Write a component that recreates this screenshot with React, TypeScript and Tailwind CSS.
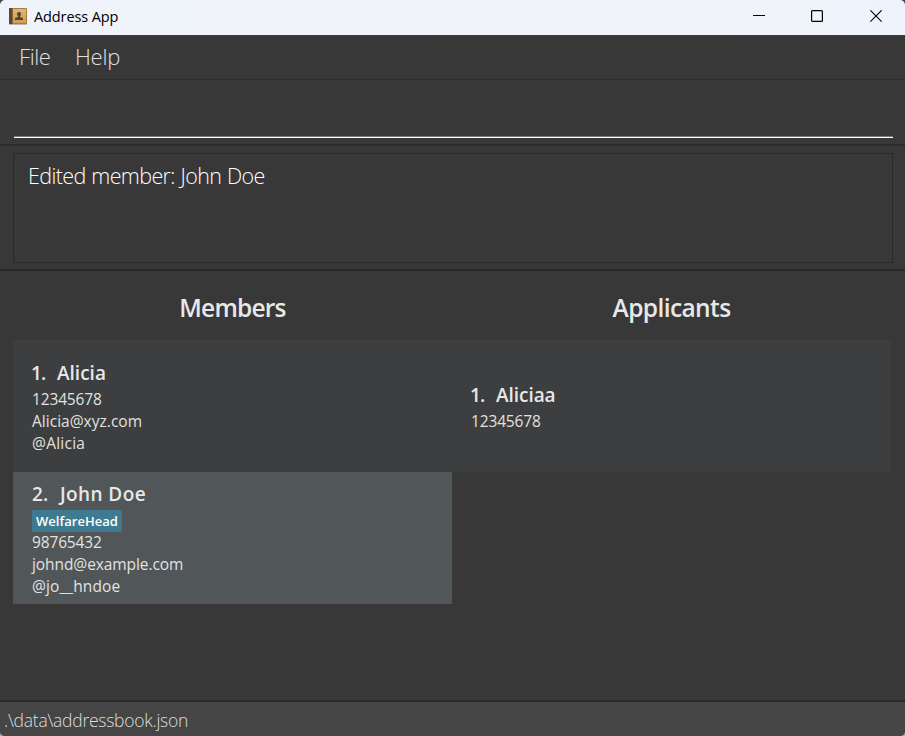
import React from "react";

type Line = { text: string; tracking: string };

type Person = {
  index: number;
  indexClass: string;
  name: string;
  nameClass: string;
  tag?: string;
  lines: Line[];
};

const members: Person[] = [
  {
    index: 1,
    indexClass: "w-[26px] -ml-px tracking-[-0.8px]",
    name: "Alicia",
    nameClass: "tracking-[0px]",
    lines: [
      { text: "12345678", tracking: "tracking-[-0.15px]" },
      { text: "Alicia@xyz.com", tracking: "tracking-[0.02px]" },
      { text: "@Alicia", tracking: "tracking-[0.25px]" },
    ],
  },
  {
    index: 2,
    indexClass: "w-[28px] tracking-[0px]",
    name: "John Doe",
    nameClass: "tracking-[0.4px]",
    tag: "WelfareHead",
    lines: [
      { text: "98765432", tracking: "tracking-[-0.15px]" },
      { text: "johnd@example.com", tracking: "tracking-[-0.08px]" },
      { text: "@jo__hndoe", tracking: "tracking-[0.1px]" },
    ],
  },
];

const applicants: Person[] = [
  {
    index: 1,
    indexClass: "w-[26px] -ml-px tracking-[-0.8px]",
    name: "Aliciaa",
    nameClass: "tracking-[-0.05px]",
    lines: [{ text: "12345678", tracking: "tracking-[-0.15px]" }],
  },
];

function AppIcon() {
  return (
    <svg width="18" height="17" viewBox="0 0 18 17" className="shrink-0">
      <defs>
        <linearGradient id="cover" x1="0" y1="0" x2="0" y2="1">
          <stop offset="0" stopColor="#dfb66f" />
          <stop offset="1" stopColor="#d49d49" />
        </linearGradient>
      </defs>
      <rect x="0" y="0" width="18" height="16" rx="0.6" fill="#a87d40" />
      <rect x="0" y="0" width="3" height="16" rx="0.6" fill="#594739" />
      <rect x="3" y="0" width="1" height="16" fill="#86663c" />
      <rect x="4" y="1" width="13" height="14" fill="url(#cover)" />
      <path d="M10 4c1.400 0 2 .8 2 1.900 0 1-.4 1.700-.9 2.200v.8l2.900 1v2.100H6V9.900l2.900-1v-.8C8.400 7.600 8 6.900 8 5.900 8 4.800 8.600 4 10 4z" fill="#504438" />
      <rect x="0" y="16" width="18" height="1" fill="#b9b6b3" />
    </svg>
  );
}

function TitleBar() {
  return (
    <header className="flex h-[35px] shrink-0 items-start bg-gradient-to-r from-[#eff3fb] via-[#f2f3f8] via-75% to-[#eef3fc] pl-[9px] text-black">
      <div className="flex h-[33px] items-center">
        <AppIcon />
        <span className="ml-[7px] text-[14.5px] tracking-[-0.1px]">Address App</span>
      </div>
      <div className="ml-auto flex pr-[23px] pt-[10px]">
        <svg width="12" height="13" viewBox="0 0 12 13" className="mr-[46px]">
          <path d="M0 5.500h12" stroke="#000" fill="none" />
        </svg>
        <svg width="12" height="13" viewBox="0 0 12 13" className="mr-[47px]">
          <rect x="0.600" y="0.600" width="10.800" height="10.800" rx="1" stroke="#000" strokeWidth="1.200" fill="none" />
        </svg>
        <svg width="12" height="13" viewBox="0 0 12 13">
          <path d="M.3.300l11.400 11.400M11.700.300L.3 11.700" stroke="#000" strokeWidth="1.150" fill="none" />
        </svg>
      </div>
    </header>
  );
}

function PersonCard({ person, selected }: { person: Person; selected?: boolean }) {
  return (
    <div
      className={`flex h-[132px] flex-col justify-center pl-[19px] ${
        selected ? "bg-[#515658]" : "bg-[#3c3e3f]"
      }`}
    >
      <div className="flex h-[29px] items-center text-[19px] font-semibold text-[#e8e8e8]">
        <span className={person.indexClass}>{person.index}.</span>
        <span className={person.nameClass}>{person.name}</span>
      </div>
      {person.tag && (
        <div className="flex h-[22px] pt-px">
          <span className="flex h-[22px] items-center rounded-[2px] bg-[#3e7b91] px-1 pt-[2px] text-[13px] font-semibold tracking-[0.02px] text-white">
            {person.tag}
          </span>
        </div>
      )}
      {person.lines.map((line) => (
        <div key={line.text} className={`h-[22px] text-[15.500px] leading-[22px] text-[#e2e2e2] ${line.tracking}`}>
          {line.text}
        </div>
      ))}
    </div>
  );
}

type ColumnProps = {
  title: string;
  titleClass: string;
  people: Person[];
  selected?: number;
};

function PersonColumn({ title, titleClass, people, selected }: ColumnProps) {
  return (
    <section className="w-[439px]">
      <h2
        className={`flex h-[69px] items-center justify-center pt-[5px] text-[24.500px] font-semibold text-[#e8e8e8] ${titleClass}`}
      >
        {title}
      </h2>
      {people.map((person) => (
        <PersonCard key={person.index} person={person} selected={person.index === selected} />
      ))}
    </section>
  );
}

export default function App() {
  return (
    <div className="h-[736px] w-[905px] bg-gradient-to-b from-[#444444] to-[#a8a8a8]">
      <div className="flex h-[736px] w-[905px] flex-col overflow-hidden rounded-[5px] bg-[#383838] font-['Open_Sans','Noto_Sans',sans-serif]">
        <TitleBar />
        <nav className="flex h-[45px] shrink-0 items-center border-b border-[#2c2c2c] pb-[2px] pl-[19px] text-[22px] font-light text-[#e0e0e0]">
          <span className="w-[56px] tracking-[-0.4px]">File</span>
          <span className="tracking-[-0.25px]">Help</span>
        </nav>
        <div className="flex h-[66px] shrink-0 flex-col border-b-2 border-[#2b2b2b] pl-[14px] pr-[12px] pt-[56px]">
          <div className="h-px bg-[#777777]" />
          <div className="h-px bg-white" />
        </div>
        <div className="h-[125px] shrink-0 border-b-2 border-[#292929] pl-[13px] pr-3 pt-[7px]">
          <div className="h-[110px] border border-[#292929] pl-[14px] pt-[7px] text-[21.500px] font-light leading-[30px] tracking-[-0.62px] text-white [word-spacing:0.700px]">
            Edited member: John Doe
          </div>
        </div>
        <main className="flex flex-1 pl-[13px]">
          <PersonColumn title="Members" titleClass="tracking-[-0.8px]" people={members} selected={2} />
          <PersonColumn title="Applicants" titleClass="tracking-[-0.6px]" people={applicants} />
        </main>
        <footer className="flex h-[36px] shrink-0 items-center border-t-2 border-[#2a2a2a] bg-[#454545] pb-px pl-[4px] pt-[3px] text-[17.500px] font-light tracking-[-0.26px] text-[#dedede]">
          .\data\addressbook.json
        </footer>
      </div>
    </div>
  );
}
